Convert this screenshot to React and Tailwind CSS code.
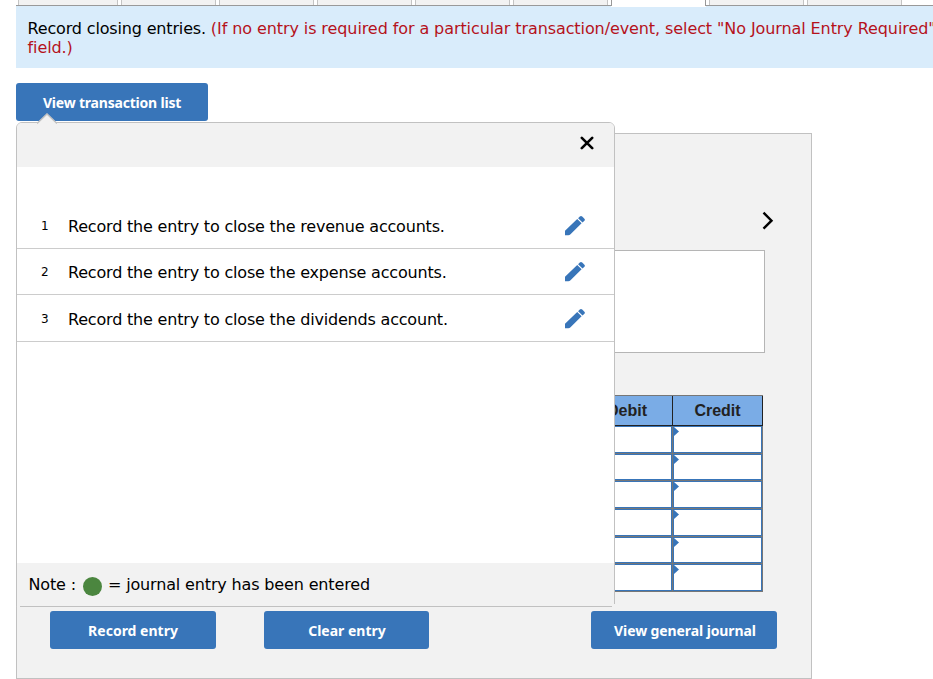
import clsx from 'clsx';

const tabs = [
  { id: 1, className: 'ml-[2px] w-[100px]' },
  { id: 2, className: 'ml-[3px] w-[95px]' },
  { id: 3, className: 'ml-[3px] w-[95px]' },
  { id: 4, className: 'ml-[3px] w-[95px]' },
  { id: 5, className: 'ml-[3px] w-[95px]' },
  { id: 6, className: 'ml-[3px] w-[95px]' },
  { id: 7, active: true },
  { id: 8, className: 'ml-[3px] w-[95px]' },
  { id: 9, className: 'ml-[3px] w-[95px]' },
];

const entries = [
  { num: 1, text: 'Record the entry to close the revenue accounts.', height: 'h-[46px]' },
  { num: 2, text: 'Record the entry to close the expense accounts.', height: 'h-[46px]' },
  { num: 3, text: 'Record the entry to close the dividends account.', height: 'h-[47px] pt-px' },
];

const rowHeights = ['h-[28px]', 'h-[27px]', 'h-[28px]', 'h-[28px]', 'h-[27px]', 'h-[28px]'];

export default function App() {
  return (
    <div className="relative h-[679px] w-[933px] overflow-hidden bg-white pl-4 font-['DejaVu_Sans',Verdana,sans-serif] text-base text-black">
      <TabStrip />
      <div className="h-[62px] w-[940px] bg-[#d9ecfb] pt-[13px] pl-[11.5px] leading-[19px] whitespace-nowrap tracking-[-0.09px]">
        <span className="tracking-[-0.16px]">Record closing entries. </span>
        <span className="text-[#b5121b]">
          (If no entry is required for a particular transaction/event, select "No Journal Entry Required"
          <br />
          field.)
        </span>
      </div>

      <Button className="mt-[15px] w-[192px] tracking-[-0.2px]">View transaction list</Button>

      <div className="mt-[12px] flex h-[546px] w-[796px] flex-col border border-[#c1c1c1] bg-[#f2f2f2]">
        <div className="flex h-[116px] justify-end pt-[76px] pr-[36px]">
          <svg className="h-5 w-[14px]" viewBox="0 0 14 20" fill="none" stroke="black" strokeWidth="2.4">
            <path d="M2.5 2.700 10.500 10.700 2.500 18.700" />
          </svg>
        </div>
        <div className="ml-[33px] h-[103px] w-[715px] border border-[#b5b5b5] bg-white" />
        <JournalTable />
        <div className="mt-[19px] flex pl-[33px]">
          <Button className="w-[166px]">Record entry</Button>
          <Button className="ml-12 w-[165px] pl-px">Clear entry</Button>
          <Button className="ml-[162px] w-[186px] pl-[2px] tracking-[-0.1px]">View general journal</Button>
        </div>
      </div>

      <TransactionList />
    </div>
  );
}

function TabStrip() {
  return (
    <div className="flex h-[6px] w-[940px]">
      <div className="flex border-b border-[#999] pr-[3px]">
        {tabs.slice(0, 6).map((tab) => (
          <div key={tab.id} className={clsx('h-[5px] border-x border-[#c4c4c4] bg-[#f2f2f2]', tab.className)} />
        ))}
      </div>
      <div className="relative h-[7px] w-[95px] shrink-0 bg-white">
        <div className="h-[6px] border-x border-[#999]" />
      </div>
      <div className="flex grow border-b border-[#999]">
        {tabs.slice(7).map((tab) => (
          <div key={tab.id} className={clsx('h-[5px] border-x border-[#c4c4c4] bg-[#f2f2f2]', tab.className)} />
        ))}
      </div>
    </div>
  );
}

function Button({ className, children }) {
  return (
    <button
      className={clsx(
        "block h-[38px] rounded-[3px] bg-[#3875b9] pt-[2px] font-['Noto_Sans',sans-serif] text-sm font-bold text-white",
        className
      )}
    >
      {children}
    </button>
  );
}

function JournalTable() {
  return (
    <div className="mt-[42px] ml-[33px] w-[713px]">
      <div className="flex h-[31px] border-y border-t-[#777] border-b-[#222] bg-[#7aace6] font-['Liberation_Sans',sans-serif] font-bold text-[#222]">
        <div className="w-[532px]" />
        <div className="flex w-[91px] items-center justify-center border-r border-[#222]">Debit</div>
        <div className="flex w-[90px] items-center justify-center border-r border-[#222]">Credit</div>
      </div>
      {rowHeights.map((height, i) => (
        <div key={i} className={clsx('flex border-b border-[#777] bg-white', height)}>
          <div className="w-[532px]" />
          <Cell className="w-[91px]" />
          <Cell className="w-[90px]" />
        </div>
      ))}
    </div>
  );
}

function Cell({ className }) {
  return (
    <div className={clsx('border-r border-[#777]', className)}>
      <div className="h-full border border-[#3875b9]">
        <svg className="h-[9px] w-[5px]" viewBox="0 0 5 9" fill="#3875b9">
          <path d="M0 0 5 4.500 0 9Z" />
        </svg>
      </div>
    </div>
  );
}

function TransactionList() {
  return (
    <div className="absolute top-[122px] left-4 flex h-[485px] w-[599px] flex-col rounded-t-[6px] border border-[#c1c1c1] bg-white">
      <svg className="absolute -top-[10px] left-[20px] h-[11px] w-5" viewBox="0 0 20 11">
        <path d="M0 10.5 10 0.5 20 10.5V11H0Z" fill="#f2f2f2" />
        <path d="M0 10.5 10 1 20 10.5" fill="none" stroke="#c1c1c1" strokeWidth="1.4" />
      </svg>
      <div className="flex h-[44px] items-center justify-end rounded-t-[5px] bg-[#f2f2f2] pr-[20px]">
        <svg className="-mt-[4px] h-[14px] w-[14px]" viewBox="0 0 14 14" stroke="black" strokeWidth="2.6" strokeLinecap="round">
          <path d="M1.800 1.800 12.200 12.200M12.200 1.800 1.800 12.200" />
        </svg>
      </div>
      <div className="mt-[36px] grow">
        {entries.map((entry) => (
          <div key={entry.num} className={clsx('flex items-center border-b border-[#ccc]', entry.height)}>
            <span className="w-[51px] pl-6 text-[12px]">{entry.num}</span>
            <span className="grow pt-[3px] tracking-[-0.19px]">{entry.text}</span>
            <PencilIcon />
          </div>
        ))}
      </div>
      <div className="flex h-[43px] items-center bg-[#f2f2f2] pl-[11.5px] tracking-[-0.15px]">
        Note :
        <span className="mt-[3px] mr-[6px] ml-[7px] h-[19px] w-[19px] rounded-full bg-[#4b863f]" />
        = journal entry has been entered
      </div>
      {/* the frame stays open at its bottom corners */}
      <span className="absolute -bottom-px left-0 h-px w-[3px] bg-[#f2f2f2]" />
      <span className="absolute -right-px -bottom-px h-[3px] w-[3px] bg-[#f2f2f2]" />
    </div>
  );
}

function PencilIcon() {
  return (
    <svg className="mr-[29px] h-5 w-5" viewBox="0 0 20 20" fill="#3875b9">
      <path d="M0 14.800 12.200 3 16.600 7.300 5.500 18.300Q4.600 19.200 3.300 19.200H0Z" />
      <path d="M13.100 2.200 14.800 .6Q16 -.4 17.200 .6L19.400 2.700Q20.300 3.700 19.400 4.700L17.500 6.500Z" />
    </svg>
  );
}
